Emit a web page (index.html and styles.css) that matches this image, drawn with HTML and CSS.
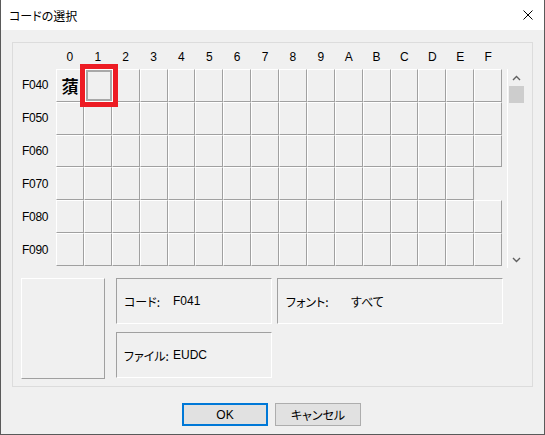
FILE: index.html
```html
<!DOCTYPE html>
<html lang="ja">
<head>
    <meta charset="UTF-8">
    <title>コードの選択</title>
    <link rel="stylesheet" href="styles.css">
</head>
<body>
    <div class="window">
        <div class="titlebar">
            <span class="title-text">コードの選択</span>
            <svg class="close-icon" width="10" height="10" viewBox="0 0 10 10">
                <path d="M0.5 0.5 L9.5 9.5 M9.5 0.5 L0.5 9.5" stroke="#000" stroke-width="1" fill="none"/>
            </svg>
        </div>
        <div class="content">
            <div class="frame">
                <div class="chart-area">
                    <div class="chart">
                        <div></div>
                        <div class="col-label">0</div><div class="col-label">1</div><div class="col-label">2</div><div class="col-label">3</div>
                        <div class="col-label">4</div><div class="col-label">5</div><div class="col-label">6</div><div class="col-label">7</div>
                        <div class="col-label">8</div><div class="col-label">9</div><div class="col-label">A</div><div class="col-label">B</div>
                        <div class="col-label">C</div><div class="col-label">D</div><div class="col-label">E</div><div class="col-label">F</div>

                        <div class="row-label">F040</div>
                        <div class="cell glyph-cell">蕦</div>
                        <div class="cell selected"><div class="sel"><div class="sel-inner"></div></div></div>
                        <div class="cell"></div><div class="cell"></div><div class="cell"></div><div class="cell"></div><div class="cell"></div>
                        <div class="cell"></div><div class="cell"></div><div class="cell"></div><div class="cell"></div><div class="cell"></div>
                        <div class="cell"></div><div class="cell"></div><div class="cell"></div><div class="cell"></div>

                        <div class="row-label">F050</div>
                        <div class="cell"></div><div class="cell"></div><div class="cell"></div><div class="cell"></div><div class="cell"></div><div class="cell"></div><div class="cell"></div><div class="cell"></div>
                        <div class="cell"></div><div class="cell"></div><div class="cell"></div><div class="cell"></div><div class="cell"></div><div class="cell"></div><div class="cell"></div><div class="cell"></div>

                        <div class="row-label">F060</div>
                        <div class="cell"></div><div class="cell"></div><div class="cell"></div><div class="cell"></div><div class="cell"></div><div class="cell"></div><div class="cell"></div><div class="cell"></div>
                        <div class="cell"></div><div class="cell"></div><div class="cell"></div><div class="cell"></div><div class="cell"></div><div class="cell"></div><div class="cell"></div><div class="cell"></div>

                        <div class="row-label">F070</div>
                        <div class="cell"></div><div class="cell"></div><div class="cell"></div><div class="cell"></div><div class="cell"></div><div class="cell"></div><div class="cell"></div><div class="cell"></div>
                        <div class="cell"></div><div class="cell"></div><div class="cell"></div><div class="cell"></div><div class="cell"></div><div class="cell"></div><div class="cell"></div><div class="cell empty"></div>

                        <div class="row-label">F080</div>
                        <div class="cell"></div><div class="cell"></div><div class="cell"></div><div class="cell"></div><div class="cell"></div><div class="cell"></div><div class="cell"></div><div class="cell"></div>
                        <div class="cell"></div><div class="cell"></div><div class="cell"></div><div class="cell"></div><div class="cell"></div><div class="cell"></div><div class="cell"></div><div class="cell"></div>

                        <div class="row-label">F090</div>
                        <div class="cell"></div><div class="cell"></div><div class="cell"></div><div class="cell"></div><div class="cell"></div><div class="cell"></div><div class="cell"></div><div class="cell"></div>
                        <div class="cell"></div><div class="cell"></div><div class="cell"></div><div class="cell"></div><div class="cell"></div><div class="cell"></div><div class="cell"></div><div class="cell"></div>
                    </div>
                    <div class="scrollbar">
                        <div class="arrow">
                            <svg width="9" height="6" viewBox="0 0 9 6"><path d="M1 5 L4.5 1.5 L8 5" stroke="#606060" stroke-width="1.4" fill="none"/></svg>
                        </div>
                        <div class="thumb"></div>
                        <div class="track"></div>
                        <div class="arrow">
                            <svg width="9" height="6" viewBox="0 0 9 6"><path d="M1 1 L4.5 4.5 L8 1" stroke="#606060" stroke-width="1.4" fill="none"/></svg>
                        </div>
                    </div>
                </div>
                <div class="info-area">
                    <div class="preview"></div>
                    <div class="panels">
                        <div class="panel"><span class="label">コード:</span><span>F041</span></div>
                        <div class="panel panel-font"><span class="label label-wide">フォント:</span><span>すべて</span></div>
                        <div class="panel"><span class="label">ファイル:</span><span>EUDC</span></div>
                    </div>
                </div>
            </div>
            <div class="buttons">
                <button class="btn btn-default">OK</button>
                <button class="btn">キャンセル</button>
            </div>
        </div>
    </div>
</body>
</html>
```

FILE: styles.css
```css
body {
    margin: 0;
    padding: 0;
    background-color: #f0f0f0;
    font-family: "Liberation Sans", "Noto Sans CJK JP", sans-serif;
    font-size: 12px;
    font-feature-settings: "palt";
    color: #000;
}

.window {
    width: 545px;
    height: 435px;
    box-sizing: border-box;
    border: 1px solid #5a5a5a;
    border-top: none;
    background-color: #f0f0f0;
    display: flex;
    flex-direction: column;
}

.titlebar {
    height: 30px;
    background-color: #fff;
    display: flex;
    align-items: center;
    justify-content: space-between;
    padding: 0 11px 0 8px;
}

.title-text {
    font-family: "Noto Sans CJK JP", sans-serif;
    font-size: 12px;
}

.close-icon {
    display: block;
}

.content {
    padding: 12px 11px 0 11px;
}

.frame {
    height: 345px;
    box-sizing: border-box;
    border: 1px solid #dcdcdc;
}

.chart-area {
    display: flex;
}

.chart {
    width: 489px;
    height: 223px;
    display: grid;
    grid-template-columns: 43px repeat(16, 1fr);
    grid-template-rows: 26px repeat(6, 1fr);
}

.col-label {
    display: flex;
    align-items: flex-end;
    justify-content: center;
    padding-bottom: 5px;
    line-height: 14px;
}

.row-label {
    display: flex;
    align-items: center;
    padding-left: 9px;
    letter-spacing: -0.3px;
}

.cell {
    box-sizing: border-box;
    border-top: 1px solid #fff;
    border-left: 1px solid #fff;
    border-right: 1px solid #a0a0a0;
    border-bottom: 1px solid #a0a0a0;
}

.cell.empty {
    border: none;
}

.glyph-cell {
    display: flex;
    align-items: center;
    justify-content: center;
    font-family: "Noto Sans CJK JP", sans-serif;
    font-weight: bold;
    font-size: 17px;
    line-height: 1;
}

.selected {
    position: relative;
}

.sel {
    position: absolute;
    left: -5px;
    top: -6px;
    width: 38px;
    height: 43px;
    box-sizing: border-box;
    border: 5px solid #ed1c24;
    background-color: #fff;
    padding: 1px;
    z-index: 1;
}

.sel-inner {
    height: 100%;
    box-sizing: border-box;
    border: 2px solid #a8a8a8;
    background-color: #f0f0f0;
}

.scrollbar {
    margin-top: 26px;
    margin-left: 5px;
    width: 16px;
    height: 199px;
    border-left: 1px solid #fff;
    display: flex;
    flex-direction: column;
}

.arrow {
    height: 17px;
    display: flex;
    align-items: center;
    justify-content: center;
}

.thumb {
    height: 17px;
    margin-left: 1px;
    background-color: #cdcdcd;
}

.track {
    flex: 1;
}

.info-area {
    display: flex;
    margin-top: 10px;
    padding-left: 8px;
}

.preview {
    width: 84px;
    height: 101px;
    box-sizing: border-box;
    border-top: 1px solid #fff;
    border-left: 1px solid #fff;
    border-right: 1px solid #a0a0a0;
    border-bottom: 1px solid #a0a0a0;
}

.panels {
    margin-left: 11px;
    display: grid;
    grid-template-columns: 156px 226px;
    grid-template-rows: 46px 46px;
    column-gap: 5px;
    row-gap: 8px;
}

.panel {
    box-sizing: border-box;
    border-top: 1px solid #a0a0a0;
    border-left: 1px solid #a0a0a0;
    border-right: 1px solid #fff;
    border-bottom: 1px solid #fff;
    display: flex;
    align-items: center;
    padding-left: 7px;
}

.panel-font {
    padding-left: 8px;
}

.label {
    width: 49px;
    font-family: "Noto Sans CJK JP", sans-serif;
}

.label-wide {
    width: 65px;
}

.buttons {
    display: flex;
    justify-content: center;
    gap: 7px;
    margin-top: 16px;
    padding-right: 2px;
}

.btn {
    width: 86px;
    height: 23px;
    box-sizing: border-box;
    background-color: #e1e1e1;
    border: 1px solid #adadad;
    font-family: "Liberation Sans", "Noto Sans CJK JP", sans-serif;
    font-size: 12px;
    font-feature-settings: "palt";
    color: #000;
    padding: 0;
}

.btn-default {
    border: 2px solid #0078d7;
}
```
